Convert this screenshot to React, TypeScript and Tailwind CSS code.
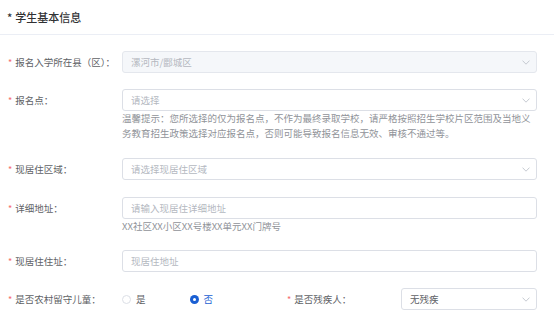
type FieldProps = {
  label: string;
  children: React.ReactNode;
  className?: string;
};

function Chevron() {
  return (
    <svg
      width="8"
      height="5"
      viewBox="0 0 8 5"
      className="shrink-0"
      fill="none"
      stroke="#c0c4cc"
      strokeWidth="0.9"
    >
      <path d="M0.5 0.6 L4 4.2 L7.5 0.6" />
    </svg>
  );
}

function Field({ label, children, className = "" }: FieldProps) {
  return (
    <div className={`flex items-start ${className}`}>
      <div className="flex h-[22px] w-[114px] shrink-0 items-center text-[#606266]">
        <span className="mr-[3px] text-[9px] text-[#f56c6c]">*</span>
        <span>{label}</span>
      </div>
      <div className="min-w-0 flex-1">{children}</div>
    </div>
  );
}

function Select({
  value,
  placeholder,
  disabled,
}: {
  value?: string;
  placeholder?: string;
  disabled?: boolean;
}) {
  const textColor = disabled || !value ? "text-[#b4b8bf]" : "text-[#606266]";
  return (
    <div
      className={`flex h-[22px] items-center justify-between rounded-[3px] border pl-[8px] pr-[6px] ${
        disabled ? "border-[#e4e7ed] bg-[#f5f7fa]" : "border-[#dcdfe6] bg-white"
      }`}
    >
      <span className={textColor}>{value ?? placeholder}</span>
      <Chevron />
    </div>
  );
}

function Input({ placeholder }: { placeholder: string }) {
  return (
    <div className="flex h-[22px] items-center rounded-[3px] border border-[#dcdfe6] bg-white pl-[8px]">
      <span className="text-[#b4b8bf]">{placeholder}</span>
    </div>
  );
}

function Radio({ label, checked }: { label: string; checked?: boolean }) {
  return (
    <span className="inline-flex items-center gap-[5px]">
      {checked ? (
        <span className="flex h-[9px] w-[9px] items-center justify-center rounded-full bg-[#1a5fd3]">
          <span className="h-[3px] w-[3px] rounded-full bg-white" />
        </span>
      ) : (
        <span className="h-[9px] w-[9px] rounded-full border border-[#dcdfe6] bg-white" />
      )}
      <span className={checked ? "text-[#1a5fd3]" : "text-[#606266]"}>{label}</span>
    </span>
  );
}

export default function App() {
  return (
    <div
      className="h-[319px] w-[554px] overflow-hidden bg-white text-[9.5px] leading-[15px]"
      style={{ fontFamily: '"Noto Sans CJK SC", "Noto Sans", sans-serif' }}
    >
      <div className="flex h-[35px] items-center border-b border-[#ebeef5] pl-[7px] text-[11px] font-medium text-[#303133]">
        <span className="mr-[3px]">*</span>
        学生基本信息
      </div>

      <div className="pl-[8px] pr-[17px] pt-[16px]">
        <Field label="报名入学所在县（区）：" className="mb-[16px]">
          <Select value="漯河市/郾城区" disabled />
        </Field>

        <Field label="报名点：" className="mb-[17px]">
          <Select placeholder="请选择" />
          <p className="text-[#909399]">
            温馨提示：您所选择的仅为报名点，不作为最终录取学校，请严格按照招生学校片区范围及当地义务教育招生政策选择对应报名点，否则可能导致报名信息无效、审核不通过等。
          </p>
        </Field>

        <Field label="现居住区域：" className="mb-[17px]">
          <Select placeholder="请选择现居住区域" />
        </Field>

        <Field label="详细地址：" className="mb-[16px]">
          <Input placeholder="请输入现居住详细地址" />
          <p className="text-[#909399]">XX社区XX小区XX号楼XX单元XX门牌号</p>
        </Field>

        <Field label="现居住住址：" className="mb-[16px]">
          <Input placeholder="现居住地址" />
        </Field>

        <div className="flex">
          <Field label="是否农村留守儿童：" className="w-[279px] shrink-0">
            <div className="flex h-[22px] items-center gap-[44px]">
              <Radio label="是" />
              <Radio label="否" checked />
            </div>
          </Field>
          <Field label="是否残疾人：" className="flex-1">
            <Select value="无残疾" />
          </Field>
        </div>
      </div>
    </div>
  );
}
